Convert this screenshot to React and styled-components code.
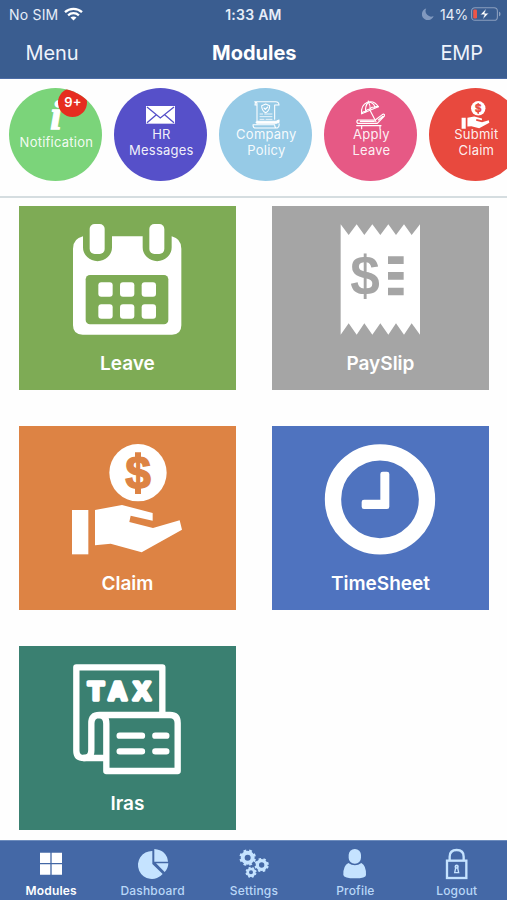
import React, { useState } from 'react';
import styled, { createGlobalStyle } from 'styled-components';

const GlobalStyle = createGlobalStyle`
  * {
    box-sizing: border-box;
  }

  body {
    margin: 0;
    background: #fff;
    font-family: Inter, 'Liberation Sans', sans-serif;
  }
`;

const Screen = styled.div`
  width: 507px;
  height: 900px;
  display: flex;
  flex-direction: column;
  overflow: hidden;
  background: #fefefe;
`;

const Header = styled.header`
  height: 79px;
  flex: none;
  background: #3a5d90;
  color: #fff;
  border-bottom: 1px solid #4c6ca6;
`;

const StatusBar = styled.div`
  height: 27px;
  display: grid;
  grid-template-columns: 1fr auto 1fr;
  align-items: center;
  padding: 1px 6px 0 9px;
  font-size: 14px;
  color: #e6edf8;
`;

const Carrier = styled.div`
  display: flex;
  align-items: center;
  gap: 6px;
  letter-spacing: 0.2px;
`;

const Clock = styled.div`
  margin-left: -3px;
  font-size: 14px;
  font-weight: 600;
  letter-spacing: 0.25px;
`;

const Battery = styled.div`
  display: flex;
  align-items: center;
  justify-content: flex-end;
  letter-spacing: -0.2px;
`;

const Percent = styled.span`
  margin: 0 3px 0 6px;
`;

const NavBar = styled.div`
  height: 51px;
  display: grid;
  grid-template-columns: 1fr auto 1fr;
  align-items: center;
  padding: 0 24px 0 25.5px;
`;

const NavLink = styled.a`
  font-size: 20px;
  color: #eef3fb;
  letter-spacing: -0.1px;
  text-align: ${props => props.$align || 'left'};
`;

const NavTitle = styled.h1`
  margin: 0;
  font-size: 20px;
  font-weight: 650;
  letter-spacing: 0;
`;

const Shortcuts = styled.section`
  height: 119px;
  flex: none;
  display: flex;
  gap: 12px;
  padding: 8.5px 0 0 9.4px;
  overflow: hidden;
  border-bottom: 2px solid #d5dde0;
`;

const Shortcut = styled.button`
  position: relative;
  width: 93px;
  height: 93px;
  flex: none;
  display: flex;
  flex-direction: column;
  align-items: center;
  padding: 13.5px 0 0;
  border: 0;
  border-radius: 50%;
  overflow: hidden;
  background: ${props => props.$color};
  color: #fff;
  font-family: inherit;
`;

const ShortcutIcon = styled.svg`
  width: 28px;
  height: 28px;
  flex: none;
  overflow: visible;
`;

const ShortcutLabel = styled.span`
  height: 32px;
  margin-top: -3px;
  padding-left: 1px;
  display: flex;
  align-items: center;
  white-space: pre;
  text-align: center;
  font-size: 13px;
  line-height: 16px;
  letter-spacing: 0.24px;
  color: rgba(255, 255, 255, 0.93);
`;

const Badge = styled.span`
  position: absolute;
  top: 0;
  left: 49px;
  width: 29px;
  height: 29px;
  border-radius: 50%;
  background: #e62d20;
  font-size: 13px;
  font-weight: 600;
  line-height: 28px;
  text-align: center;
`;

const ModuleGrid = styled.main`
  flex: 1;
  display: grid;
  grid-template-columns: 216.5px 216.5px;
  grid-auto-rows: 184.4px;
  gap: 35.6px 36.5px;
  padding: 8px 0 0 19.2px;
`;

const Tile = styled.button`
  display: flex;
  flex-direction: column;
  align-items: center;
  padding: 18px 0 0;
  border: 0;
  background: ${props => props.$color};
  color: #fff;
  font-family: inherit;
`;

const TileIcon = styled.svg`
  width: 110px;
  height: 110px;
  overflow: visible;
`;

const TileLabel = styled.span`
  margin-top: 18px;
  font-size: 19px;
  font-weight: 600;
  line-height: 24px;
`;

const TabBar = styled.nav`
  height: 60px;
  flex: none;
  display: grid;
  grid-template-columns: repeat(5, 1fr);
  background: #4468a6;
  border-top: 1px solid #6d8cbd;
`;

const Tab = styled.button`
  display: flex;
  flex-direction: column;
  align-items: center;
  padding: 8px 0 0 1px;
  border: 0;
  background: none;
  font-family: inherit;
  font-size: 12px;
  font-weight: ${props => (props.$active ? 600 : 500)};
  line-height: 16px;
  letter-spacing: 0.2px;
  color: ${props => (props.$active ? '#fff' : '#b9d7f8')};
`;

const TabIcon = styled.svg`
  width: 30px;
  height: 30px;
  margin-bottom: 4px;
  overflow: visible;
  color: ${props => (props.$active ? '#fff' : '#c5e3ff')};
`;

const WifiIcon = () => (
  <svg width="19" height="14" viewBox="0 0 19 14" fill="none" stroke="#fff" strokeWidth="2.3">
    <path d="M1 5.1C5.7.7 13.3.7 18 5.1" />
    <path d="M4.1 8.3c3-2.8 7.8-2.8 10.8 0" />
    <path d="M9.5 13.6 6.5 10.6c1.7-1.5 4.3-1.5 6 0z" fill="#fff" stroke="none" />
  </svg>
);

const MoonIcon = () => (
  <svg width="12" height="12" viewBox="0 0 12 12">
    <path d="M4.2.4A6 6 0 1 0 11.6 8 5.6 5.6 0 0 1 4.2.4z" fill="#8199bf" />
  </svg>
);

const BatteryIcon = () => (
  <svg width="30" height="14" viewBox="0 0 30 14">
    <rect x=".6" y=".7" width="25.8" height="12.6" rx="3.4" fill="none" stroke="#8b9fbe" strokeWidth="1.1" />
    <path d="M28 4.7c2 .5 2 4.1 0 4.6z" fill="#8b9fbe" />
    <rect x="2.2" y="2.4" width="3.8" height="9.2" rx="1.3" fill="#ed5548" />
    <path d="m15.3 1.5-6 6.2h4l-1.6 4.8 6-6.3h-4z" fill="#fff" stroke="#3a5d90" strokeWidth=".5" />
  </svg>
);

// Hand is shared by the Claim tile and the Submit Claim shortcut
const HandWithCoin = ({ hole }) => (
  <>
    <circle cx="370" cy="158" r="86" fill="#fff" />
    <text
      x="370"
      y="207"
      textAnchor="middle"
      fontFamily="Liberation Sans"
      fontWeight="700"
      fontSize="136"
      fill={hole}
      stroke={hole}
      strokeWidth="5"
    >
      $
    </text>
    <path d="M361 97h18v18h-18zM361 204h18v18h-18z" fill={hole} />
    <path d="M172 270h49v133h-49z" fill="#fff" />
    <path d="M241 270l81-15 92 24v23l-66-15-4 19 71 18 80-23 7 28-121 68-93-26-47 5z" fill="#fff" />
  </>
);

const LeaveIcon = ({ color }) => (
  <>
    <path
      d="M205 109v33a43 41 0 0 0 87 0v-33h92v33a43 41 0 0 0 87 0v-33q29 7 29 37v230q0 28-28 28H204q-29 0-29-28V146q0-30 30-37z"
      fill="#fff"
    />
    <rect x="225" y="72" width="45" height="90" rx="15" fill="#fff" />
    <rect x="404" y="72" width="45" height="90" rx="15" fill="#fff" />
    <rect x="213" y="225" width="248" height="148" rx="13" fill={color} />
    {[251, 316, 381].map(x => (
      <g key={x} fill="#fff">
        <rect x={x} y="247" width="43" height="43" rx="9" />
        <rect x={x} y="313" width="43" height="43" rx="9" />
      </g>
    ))}
  </>
);

const PaySlipIcon = ({ color }) => (
  <>
    <path
      d="M219 73l24 32 24-32 23 32 24-32 24 32 24-32 23 32 24-32 23 32 25-32v331l-25-34-23 34-24-34-23 34-24-34-24 34-24-34-23 34-24-34-24 34z"
      fill="#fff"
    />
    <text
      transform="translate(292 286) scale(.95 1)"
      textAnchor="middle"
      fontFamily="Liberation Sans"
      fontWeight="700"
      fontSize="168"
      fill={color}
    >
      $
    </text>
    <path d="M361 169h47v23h-47zM361 216h47v23h-47zM361 263h47v23h-47z" fill={color} />
  </>
);

const TimeSheetIcon = () => (
  <>
    <circle cx="337" cy="238" r="141" fill="none" stroke="#fff" strokeWidth="49" />
    <path
      d="M345 155h13q7 0 7 7v98q0 7-7 7h-69q-7 0-7-7v-14q0-7 7-7h49v-77q0-7 7-7z"
      fill="#fff"
    />
  </>
);

const IrasIcon = () => (
  <g fill="none" stroke="#fff" strokeWidth="19" strokeLinejoin="round" strokeLinecap="round">
    <path d="M443 216V82H185v250q0 22 23 22h60" />
    <path d="M208 354q22 0 22-23V250q0-25 24-25h212q23 0 23 24v144H275V251q0-25-21-25" />
    <path d="M315 287h67M422 287h33M315 334h67M422 334h33" />
    <text
      x="314"
      y="181"
      textAnchor="middle"
      fontFamily="Liberation Sans"
      fontWeight="700"
      fontSize="78"
      textLength="188"
      lengthAdjust="spacing"
      fill="#fff"
      strokeWidth="11"
    >
      TAX
    </text>
  </g>
);

const InfoIcon = () => (
  <text
    x="168"
    y="153"
    textAnchor="middle"
    fontFamily="Liberation Serif"
    fontStyle="italic"
    fontWeight="700"
    fontSize="122"
    fill="#fff"
    stroke="#fff"
    strokeWidth="4"
  >
    i
  </text>
);

const EnvelopeIcon = ({ color }) => (
  <>
    <rect x="438" y="84" width="87" height="53" fill="#fff" />
    <path d="M441 87l40 33 41-33M441 134l28-24M522 134l-28-24" fill="none" stroke={color} strokeWidth="4" />
  </>
);

const PolicyIcon = () => (
  <g fill="none" stroke="#fff" strokeWidth="3.2" strokeLinejoin="round" strokeLinecap="round">
    <path d="M141 138V78q0-7-7-7M134 71h63q10 0 10 10h-13M194 81v43M141 71q-6 0-6 10h6" />
    <path d="M167 78l12 5q0 15-12 21-12-6-12-21zM162 90l4 4 7-7" />
    <path d="M150 108h8M164 108h22M150 116h36M150 124h12M168 124h18" strokeWidth="2.4" />
    <path d="M144 130h55l8-4v7l-8 3h-55l-6-3z" fill="#fff" />
    <path d="M129 140h65q0 10 8 10h-65q-8 0-8-10zM202 150q7-3 5-13" />
  </g>
);

const BeachIcon = () => (
  <g fill="none" stroke="#fff" strokeWidth="3.4" strokeLinejoin="round" strokeLinecap="round">
    <path d="M455 107q-3-25 17-34 20-7 33 13z" />
    <path d="M455 107q5-9 12-5 4-10 13-8 3-9 25-8M467 102q-2-19 8-30M480 94q2-12-5-22 17 1 20 17" />
    <path d="M480 97l18 34M476 71l-1-2" />
    <path d="M443 126h53l22-17q7-2 5 5l-21 22h-59q-5-5 0-10zM451 130h42M505 126l13-11" />
    <path d="M440 143h73M455 143v9M510 143v9" />
  </g>
);

const SubmitIcon = ({ color }) => (
  <g transform="translate(711.5 51) scale(.252)">
    <HandWithCoin hole={color} />
  </g>
);

const Gear = ({ x, y, r, hole }) => {
  const ring = (r * 2 * Math.PI) / 16;
  return (
    <g transform={`translate(${x} ${y})`} fill="none" stroke="currentColor">
      <circle r={(r + hole) / 2} strokeWidth={r - hole} />
      <circle r={r} strokeWidth={r * 0.38} strokeDasharray={`${ring} ${ring}`} transform="rotate(10)" />
    </g>
  );
};

const ModulesTabIcon = () => (
  <path d="M120 67h31v31h-31zM155 67h31v31h-31zM120 102h31v31h-31zM155 102h31v31h-31z" fill="currentColor" />
);

const DashboardTabIcon = () => (
  <g fill="currentColor">
    <path d="M454 62v39l31 30a42 42 0 1 1-31-69z" />
    <path d="M460 56q37 3 41 38h-41z" />
    <path d="M465 99h37q-1 17-11 26z" />
  </g>
);

const SettingsTabIcon = () => (
  <>
    <Gear x={741} y={82} r={21} hole={9} />
    <Gear x={783} y={104} r={18} hole={8} />
    <Gear x={751} y={126} r={14} hole={6} />
  </>
);

const ProfileTabIcon = () => (
  <g fill="currentColor">
    <rect x="287" y="56" width="37" height="44" rx="18" />
    <path d="M286 98q20 14 39 0 15 8 14 36 0 10-33 10t-35-10q-1-28 15-36z" />
  </g>
);

const LogoutTabIcon = () => (
  <g fill="none" stroke="currentColor" strokeWidth="7">
    <rect x="580" y="91" width="58" height="52" />
    <path d="M588 90V79q0-20 21-20t21 20v11" />
    <circle cx="609" cy="109" r="4" strokeWidth="5" />
    <path d="M606 113l-3 14h12l-3-14" strokeWidth="4" />
  </g>
);

const shortcuts = [
  { id: 'notification', label: 'Notification', color: '#7bd47a', viewBox: '126 69 84 84', Icon: InfoIcon, badge: '9+' },
  { id: 'hr', label: 'HR\nMessages', color: '#5650c9', viewBox: '441 69 84 84', Icon: EnvelopeIcon },
  { id: 'policy', label: 'Company\nPolicy', color: '#96cae6', viewBox: '126 69 84 84', Icon: PolicyIcon },
  { id: 'apply', label: 'Apply\nLeave', color: '#e65985', viewBox: '441 69 84 84', Icon: BeachIcon },
  { id: 'submit', label: 'Submit\nClaim', color: '#e8493e', viewBox: '756 69 84 84', Icon: SubmitIcon }
];

const modules = [
  { id: 'leave', label: 'Leave', color: '#7eab55', Icon: LeaveIcon },
  { id: 'payslip', label: 'PaySlip', color: '#a5a5a5', Icon: PaySlipIcon },
  { id: 'claim', label: 'Claim', color: '#dd8344', Icon: ({ color }) => <HandWithCoin hole={color} /> },
  { id: 'timesheet', label: 'TimeSheet', color: '#4f73bf', Icon: TimeSheetIcon },
  { id: 'iras', label: 'Iras', color: '#3a8071', Icon: IrasIcon }
];

const tabs = [
  { id: 'modules', label: 'Modules', viewBox: '108 56 90 90', Icon: ModulesTabIcon },
  { id: 'dashboard', label: 'Dashboard', viewBox: '411 56 90 90', Icon: DashboardTabIcon },
  { id: 'settings', label: 'Settings', viewBox: '715 56 90 90', Icon: SettingsTabIcon },
  { id: 'profile', label: 'Profile', viewBox: '261 56 90 90', Icon: ProfileTabIcon },
  { id: 'logout', label: 'Logout', viewBox: '565 56 90 90', Icon: LogoutTabIcon }
];

const App = () => {
  const [activeTab, setActiveTab] = useState('modules');

  return (
    <Screen>
      <GlobalStyle />
      <Header>
        <StatusBar>
          <Carrier>
            No SIM <WifiIcon />
          </Carrier>
          <Clock>1:33 AM</Clock>
          <Battery>
            <MoonIcon />
            <Percent>14%</Percent>
            <BatteryIcon />
          </Battery>
        </StatusBar>
        <NavBar>
          <NavLink>Menu</NavLink>
          <NavTitle>Modules</NavTitle>
          <NavLink $align="right">EMP</NavLink>
        </NavBar>
      </Header>

      <Shortcuts>
        {shortcuts.map(({ id, label, color, viewBox, Icon, badge }) => (
          <Shortcut key={id} $color={color}>
            <ShortcutIcon viewBox={viewBox}>
              <Icon color={color} />
            </ShortcutIcon>
            <ShortcutLabel>{label}</ShortcutLabel>
            {badge && <Badge>{badge}</Badge>}
          </Shortcut>
        ))}
      </Shortcuts>

      <ModuleGrid>
        {modules.map(({ id, label, color, Icon }) => (
          <Tile key={id} $color={color}>
            <TileIcon viewBox="172 72 330 330">
              <Icon color={color} />
            </TileIcon>
            <TileLabel>{label}</TileLabel>
          </Tile>
        ))}
      </ModuleGrid>

      <TabBar>
        {tabs.map(({ id, label, viewBox, Icon }) => (
          <Tab key={id} $active={activeTab === id} onClick={() => setActiveTab(id)}>
            <TabIcon viewBox={viewBox} $active={activeTab === id}>
              <Icon />
            </TabIcon>
            {label}
          </Tab>
        ))}
      </TabBar>
    </Screen>
  );
};

export default App;
